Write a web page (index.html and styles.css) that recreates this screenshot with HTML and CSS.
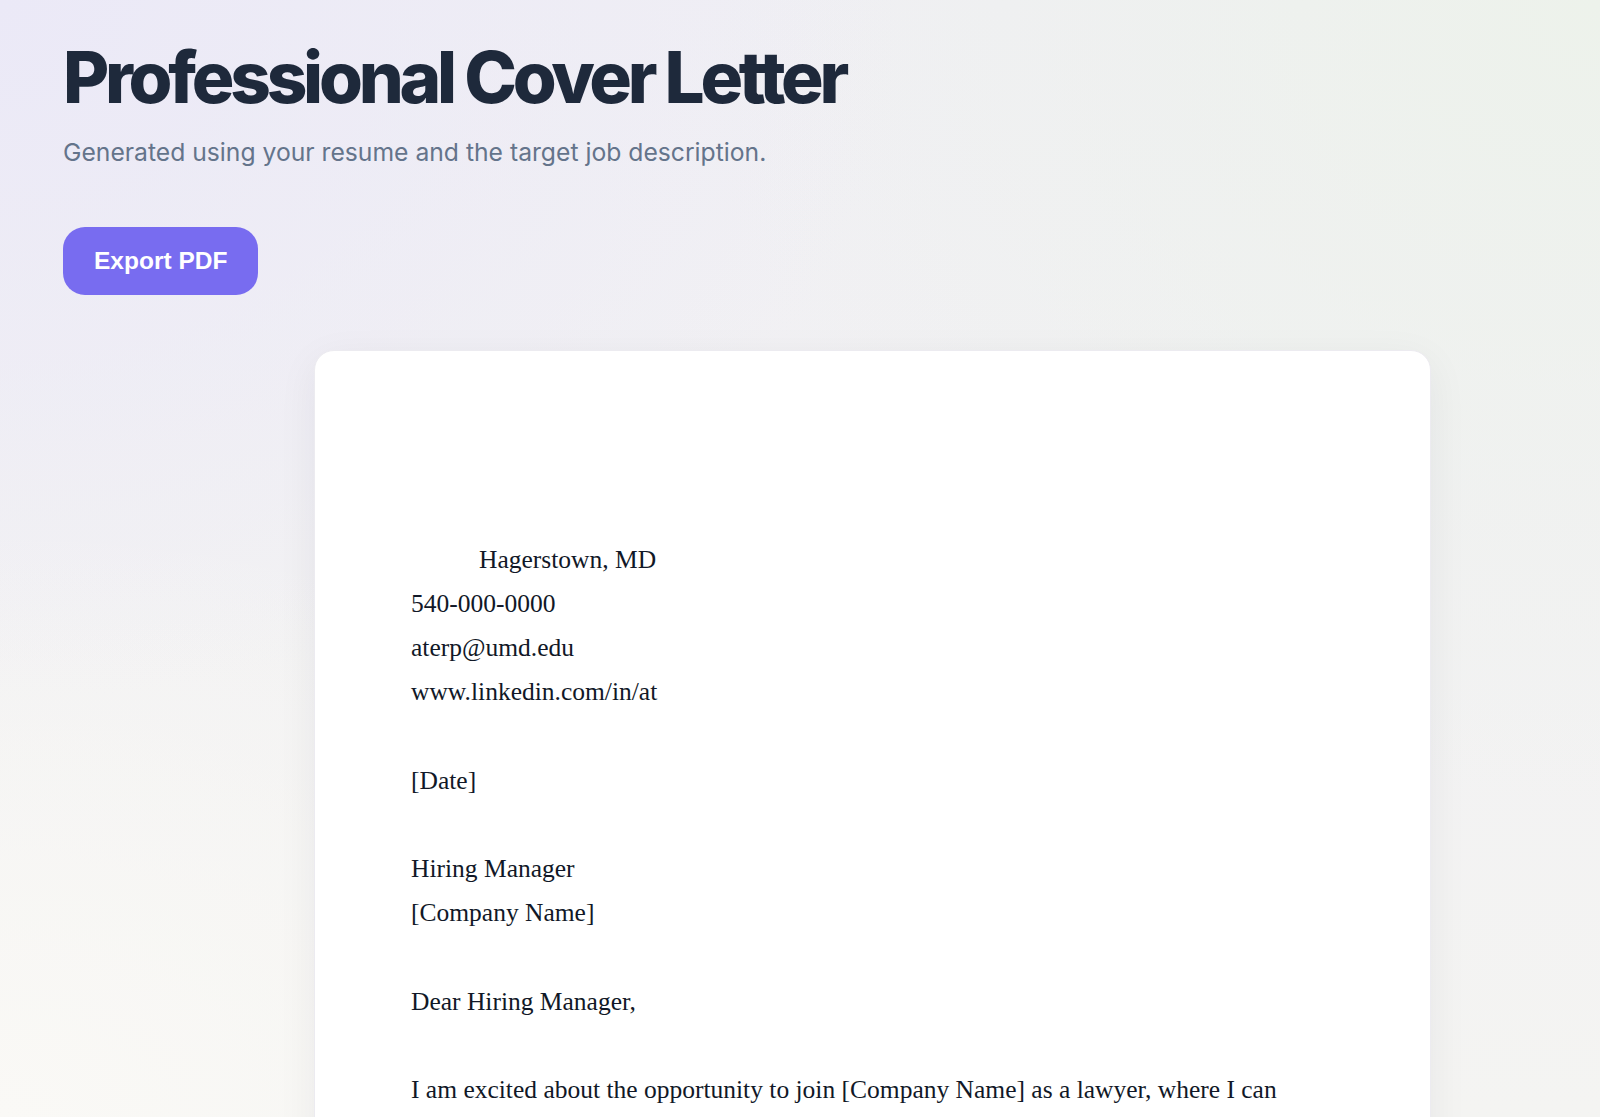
FILE: index.html
```html
<!DOCTYPE html>
<html lang="en">
<head>
  <meta charset="UTF-8">
  <meta name="viewport" content="width=device-width, initial-scale=1.0">
  <title>Professional Cover Letter</title>
  <link rel="stylesheet" href="styles.css">
</head>
<body>
  <main class="page">
    <header class="page-header">
      <h1>Professional Cover Letter</h1>
      <p class="subtitle">Generated using your resume and the target job description.</p>
    </header>

    <div class="actions">
      <button class="export-btn" type="button">Export PDF</button>
    </div>

    <article class="paper">
      <div class="letter">
        <p class="blank">&nbsp;</p>
        <p class="blank">&nbsp;</p>
        <p class="indent">Hagerstown, MD</p>
        <p>540-000-0000</p>
        <p>aterp@umd.edu</p>
        <p>www.linkedin.com/in/at</p>
        <p class="blank">&nbsp;</p>
        <p>[Date]</p>
        <p class="blank">&nbsp;</p>
        <p>Hiring Manager</p>
        <p>[Company Name]</p>
        <p class="blank">&nbsp;</p>
        <p>Dear Hiring Manager,</p>
        <p class="blank">&nbsp;</p>
        <p>I am excited about the opportunity to join [Company Name] as a lawyer, where I can</p>
      </div>
    </article>
  </main>
</body>
</html>
```

FILE: styles.css
```css
html, body {
  margin: 0;
  padding: 0;
}

body {
  font-family: 'Inter', 'Liberation Sans', sans-serif;
  min-height: 100vh;
  background-color: #f3f2f4;
  background-image:
    radial-gradient(ellipse 900px 700px at 0% 0%, #ebe9f7 0%, rgba(235, 233, 247, 0) 100%),
    radial-gradient(ellipse 900px 800px at 100% 0%, #edf2eb 0%, rgba(237, 242, 235, 0) 100%),
    radial-gradient(ellipse 900px 600px at 0% 100%, #faf9f6 0%, rgba(250, 249, 246, 0) 100%),
    linear-gradient(180deg, #f0eff4 0%, #f4f4f2 100%);
  background-attachment: fixed;
}

.page {
  padding: 38px 63px 0;
}

.page-header h1 {
  margin: 0;
  font-size: 71px;
  font-weight: 800;
  letter-spacing: -0.06em;
  line-height: 1.1;
  color: #1e293b; /* dark slate */
}

.subtitle {
  margin: 21px 0 0;
  font-size: 24.7px;
  color: #64748b; /* muted slate */
}

.actions {
  margin-top: 60px;
}

.export-btn {
  font-family: 'Liberation Sans', Arial, sans-serif;
  font-size: 24.5px;
  font-weight: 700;
  color: #fff;
  background-color: #786cf0;
  border: none;
  border-radius: 22px;
  padding: 20px 31px 20px;
  cursor: pointer;
}

.paper {
  width: 1117px;
  margin: 55px 0 0 251px;
  background: #fff;
  border: 1px solid #ecebf0;
  border-radius: 20px;
  box-shadow: 0 10px 40px rgba(30, 41, 59, 0.06);
  padding: 98px 96px 120px;
  box-sizing: border-box;
}

.letter {
  font-family: 'Liberation Serif', 'Times New Roman', serif;
  font-size: 25.5px;
  line-height: 44.2px;
  color: #111827;
}

.letter p {
  margin: 0;
}

.letter .indent {
  padding-left: 68px;
}
```
